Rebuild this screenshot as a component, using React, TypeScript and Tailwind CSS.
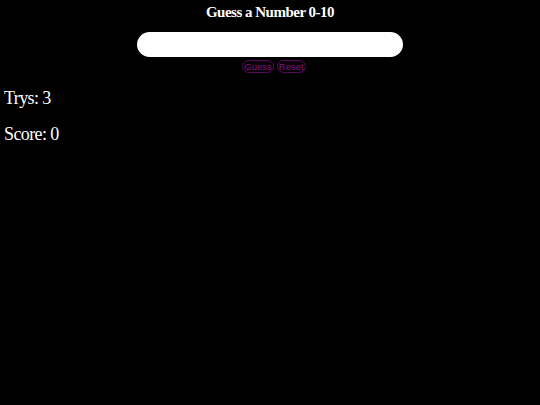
import { useState } from 'react'

const App = () => {
  const [value, setValue] = useState('')
  return (
    <div className="min-h-screen bg-black text-white font-['Liberation_Serif',serif]">
      <div className="flex flex-col items-center pt-[3px]">
        <h1 className="text-[15px] font-bold leading-[18px] tracking-[-0.5px]">Guess a Number 0-10</h1>
        <input
          value={value}
          onChange={(e) => setValue(e.target.value)}
          className="mt-[11px] w-[266px] h-[25px] rounded-full bg-white text-black px-3 outline-none"
        />
        <div className="mt-[3px] ml-[8px] flex gap-[3px] font-['Liberation_Sans',sans-serif] text-[9.5px] leading-[11px]">
          <button className="px-[1px] rounded-full border border-[#5a0a5a] text-[#7a1a7a] bg-[#0a000a]">
            Guess
          </button>
          <button className="px-[1px] rounded-full border border-[#5a0a5a] text-[#7a1a7a] bg-[#0a000a]">
            Reset
          </button>
        </div>
      </div>
      <div className="px-[4px] text-[18px] leading-[21px] tracking-[-0.6px]">
        <p className="mt-[15px]">Trys: 3</p>
        <p className="mt-[15px]">Score: 0</p>
      </div>
    </div>
  )
}

export default App
